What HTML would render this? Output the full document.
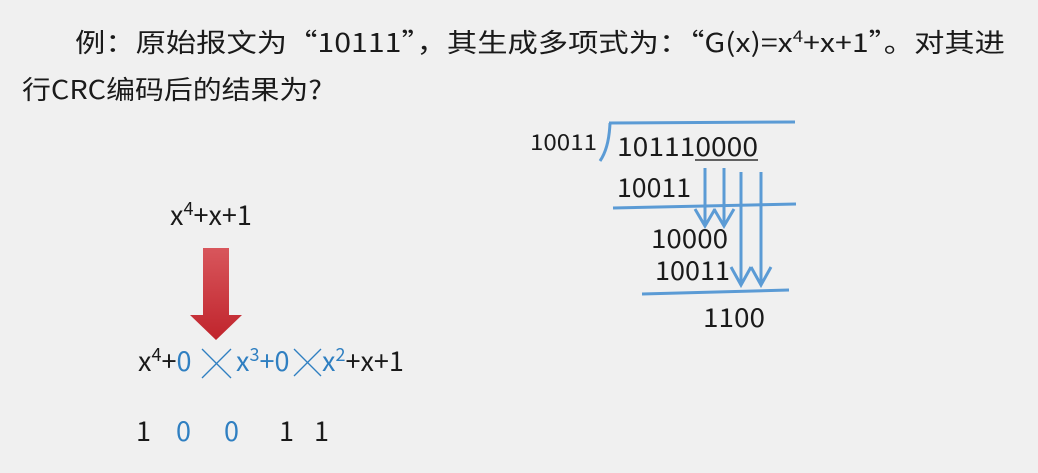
<!DOCTYPE html>
<html><head><meta charset="utf-8"><style>
html,body{margin:0;padding:0;background:#f0f0f0;}
svg{display:block}
text{font-family:"Noto Sans CJK SC","Liberation Sans",sans-serif;fill:#1a1a1a}
.b{fill:#2f7fc1}
</style></head><body>
<svg width="1038" height="473" viewBox="0 0 1038 473" xmlns="http://www.w3.org/2000/svg">
<defs><linearGradient id="rg" x1="0" y1="0" x2="0" y2="1"><stop offset="0" stop-color="#d8565c"/><stop offset="1" stop-color="#c0242c"/></linearGradient></defs>
<text x="75" y="52" font-size="26" textLength="930" lengthAdjust="spacingAndGlyphs">例：原始报文为“10111”，其生成多项式为：“G(x)=x<tspan font-size="16" dy="-10">4</tspan><tspan dy="10">+x+1”。对其进</tspan></text>
<text x="22" y="99" font-size="26" textLength="300" lengthAdjust="spacingAndGlyphs">行CRC编码后的结果为?</text>

<g stroke="#5b9bd5" stroke-width="3" fill="none">
<line x1="609" y1="123" x2="795" y2="122"/>
<path d="M600 161 Q609 148 610 123"/>
<line x1="613" y1="208" x2="796" y2="204"/>
<line x1="642" y1="294" x2="789" y2="290"/>
<line x1="705" y1="168" x2="705" y2="225"/>
<line x1="724" y1="168" x2="724" y2="225"/>
<line x1="741" y1="172" x2="741" y2="284"/>
<line x1="761" y1="172" x2="761" y2="284"/>
<path d="M695 209 L705 226 L715 209"/>
<path d="M714 209 L724 226 L734 209"/>
<path d="M731 267 L741 285 L751 267"/>
<path d="M751 267 L761 285 L771 267"/>
</g>
<line x1="695" y1="160" x2="758" y2="160" stroke="#333" stroke-width="1.5"/>
<text x="530" y="150" font-size="22" textLength="67" lengthAdjust="spacingAndGlyphs">10011</text>
<text x="617" y="156" font-size="26" textLength="141" lengthAdjust="spacingAndGlyphs">101110000</text>
<text x="617" y="197" font-size="26" textLength="74" lengthAdjust="spacingAndGlyphs">10011</text>
<text x="651" y="248" font-size="26" textLength="77" lengthAdjust="spacingAndGlyphs">10000</text>
<text x="655" y="280" font-size="26" textLength="75" lengthAdjust="spacingAndGlyphs">10011</text>
<text x="703" y="327" font-size="26" textLength="62" lengthAdjust="spacingAndGlyphs">1100</text>

<text x="170" y="225" font-size="27">x<tspan font-size="18" dy="-10">4</tspan><tspan dy="10">+x+1</tspan></text>
<path d="M203 248 H229 V315 H242 L216 340 L190 315 H203 Z" fill="url(#rg)"/>
<text x="138" y="371" font-size="27">x<tspan font-size="18" dy="-10">4</tspan><tspan dy="10">+</tspan><tspan class="b">0</tspan></text>
<g stroke="#2f7fc1" stroke-width="1.3"><line x1="202" y1="349" x2="231" y2="378"/><line x1="231" y1="349" x2="202" y2="378"/>
<line x1="294" y1="349" x2="321" y2="376"/><line x1="321" y1="349" x2="294" y2="376"/></g>
<text x="236" y="371" font-size="27" class="b">x<tspan font-size="18" dy="-10">3</tspan><tspan dy="10">+0</tspan></text>
<text x="322" y="371" font-size="27"><tspan class="b">x</tspan><tspan class="b" font-size="18" dy="-10">2</tspan><tspan dy="10">+x+1</tspan></text>
<text x="136" y="441" font-size="27">1</text>
<text x="176" y="441" font-size="27" class="b">0</text>
<text x="224" y="441" font-size="27" class="b">0</text>
<text x="279" y="441" font-size="27">1</text>
<text x="314" y="441" font-size="27">1</text>
</svg>
</body></html>
